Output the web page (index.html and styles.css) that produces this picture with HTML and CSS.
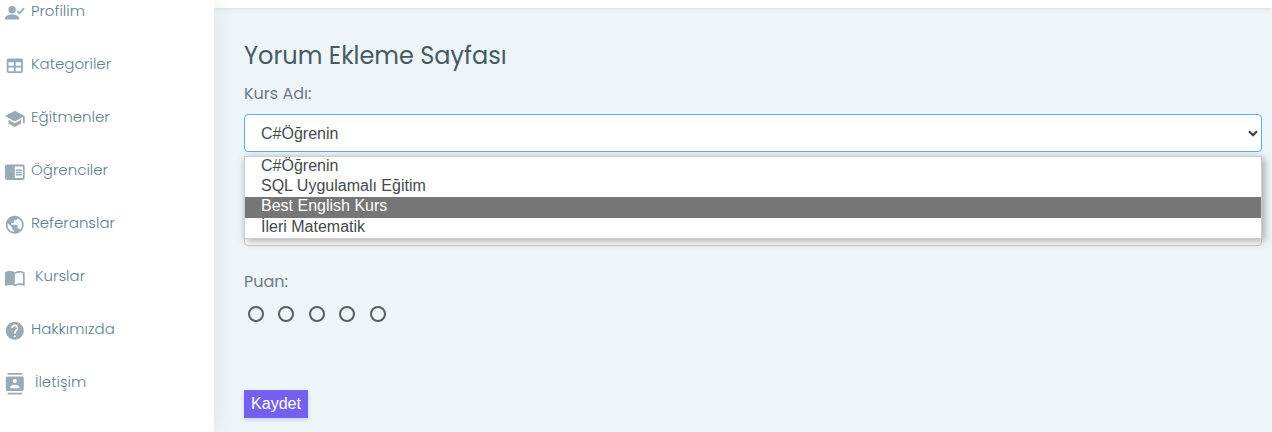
FILE: index.html
```html
<!DOCTYPE html>
<html lang="tr">
<head>
<meta charset="utf-8">
<title>Yorum Ekleme</title>
<link rel="stylesheet" href="styles.css">
</head>
<body>
<div class="layout">
  <nav class="sidebar">
    <a class="item"><svg viewBox="0 0 24 24"><path d="M9 4.500a4.100 4.100 0 1 1 0 8.200 4.100 4.100 0 0 1 0-8.200zM9 14c3.500 0 8 1.300 8 4.500V19.500H1v-1c0-3.200 4.500-4.500 8-4.500zM23 7.500l-5.700 6.500-3.300-3.300 1.400-1.400 1.800 1.800 4.300-5z"/></svg><span>Profilim</span></a>
    <a class="item"><svg viewBox="0 0 24 24"><path d="M5 4h14a2 2 0 0 1 2 2v12a2 2 0 0 1-2 2H5a2 2 0 0 1-2-2V6a2 2 0 0 1 2-2zm0 4v4h6V8H5zm8 0v4h6V8h-6zm-8 6v4h6v-4H5zm8 0v4h6v-4h-6z"/></svg><span>Kategoriler</span></a>
    <a class="item"><svg viewBox="0 0 24 24"><path d="M12 3L1 9l11 6 9-4.910V17h2V9M5 13.180v4L12 21l7-3.820v-4L12 17l-7-3.820z"/></svg><span>Eğitmenler</span></a>
    <a class="item"><svg viewBox="0 0 24 24"><path d="M21 4H3a2 2 0 0 0-2 2v13a2 2 0 0 0 2 2h18a2 2 0 0 0 2-2V6a2 2 0 0 0-2-2zm0 15h-9V6h9v13zm-1-9.500h-7V11h7V9.500zm0 2.500h-7v1.500h7V12zm0 2.500h-7V16h7v-1.500z"/></svg><span>Öğrenciler</span></a>
    <a class="item"><svg viewBox="0 0 24 24"><path d="M12 2C6.480 2 2 6.480 2 12s4.480 10 10 10 10-4.480 10-10S17.520 2 12 2zm-1 17.930c-3.950-.49-7-3.850-7-7.930 0-.62.08-1.210.21-1.790L9 15v1c0 1.100.9 2 2 2v1.930zm6.900-2.540c-.26-.81-1-1.390-1.900-1.390h-1v-3c0-.55-.45-1-1-1H8v-2h2c.55 0 1-.45 1-1V7h2c1.100 0 2-.9 2-2v-.41c2.930 1.190 5 4.060 5 7.410 0 2.080-.8 3.970-2.100 5.390z"/></svg><span>Referanslar</span></a>
    <a class="item indented"><svg viewBox="0 0 24 24"><path d="M21 5c-1.110-.35-2.330-.5-3.500-.5-1.950 0-4.050.4-5.500 1.500-1.450-1.100-3.550-1.500-5.500-1.500S2.450 4.900 1 6v14.650c0 .25.25.5.5.5.1 0 .15-.05.25-.05C3.100 20.450 5.050 20 6.500 20c1.950 0 4.050.4 5.500 1.500 1.350-.85 3.800-1.500 5.500-1.500 1.650 0 3.350.3 4.750 1.050.1.050.15.050.25.050.25 0 .5-.25.5-.5V6c-.6-.45-1.250-.75-2-1zm0 13.500c-1.100-.35-2.300-.5-3.500-.5-1.700 0-4.150.65-5.500 1.500V8c1.350-.85 3.800-1.500 5.500-1.500 1.200 0 2.400.15 3.500.5v11.500z"/></svg><span>Kurslar</span></a>
    <a class="item"><svg viewBox="0 0 24 24"><path d="M12 2C6.480 2 2 6.480 2 12s4.480 10 10 10 10-4.480 10-10S17.520 2 12 2zm1 17h-2v-2h2v2zm2.070-7.750l-.9.920C13.450 12.900 13 13.500 13 15h-2v-.5c0-1.100.45-2.100 1.170-2.830l1.240-1.260c.37-.36.590-.86.590-1.410 0-1.100-.9-2-2-2s-2 .9-2 2H8c0-2.210 1.790-4 4-4s4 1.790 4 4c0 .88-.36 1.680-.93 2.250z"/></svg><span>Hakkımızda</span></a>
    <a class="item indented"><svg viewBox="0 0 24 24"><path d="M20 0H4v2h16V0zM4 24h16v-2H4v2zM20 4H4a2 2 0 0 0-2 2v12a2 2 0 0 0 2 2h16a2 2 0 0 0 2-2V6a2 2 0 0 0-2-2zm-8 2.750a2.250 2.250 0 1 1 0 4.500 2.250 2.250 0 0 1 0-4.500zM17 17H7v-1.500c0-1.670 3.330-2.500 5-2.500s5 .83 5 2.500V17z"/></svg><span>İletişim</span></a>
  </nav>
  <div class="page">
    <header class="topbar"></header>
    <main class="content">
      <h1>Yorum Ekleme Sayfası</h1>
      <label class="label">Kurs Adı:</label>
      <div class="select">
        <span>C#Öğrenin</span>
        <svg class="chevron" viewBox="0 0 10 7"><path d="M1 1.300l4 4 4-4"/></svg>
        <div class="options">
          <div class="option">C#Öğrenin</div>
          <div class="option">SQL Uygulamalı Eğitim</div>
          <div class="option selected">Best English Kurs</div>
          <div class="option">İleri Matematik</div>
        </div>
      </div>
      <div class="comment"></div>
      <label class="label puan">Puan:</label>
      <div class="ratings"><i></i><i></i><i></i><i></i><i></i></div>
      <button class="save">Kaydet</button>
    </main>
  </div>
</div>
</body>
</html>
```
FILE: styles.css
```css
* { box-sizing: border-box; }
body {
  margin: 0;
  height: 432px;
  overflow: hidden;
  background: #edf5f9;
  font-family: Poppins, Inter, "Open Sans", sans-serif;
}
.layout { display: flex; height: 432px; }
.sidebar {
  position: relative;
  z-index: 1;
  width: 214px;
  flex: none;
  background: #fff;
  box-shadow: 1px 0 20px rgba(0, 0, 0, .08);
}
.item {
  display: flex;
  height: 53px;
  padding-left: 3.600px;
  color: #607f8d;
  font-size: 15px;
  font-weight: 300;
  line-height: 21px;
  white-space: nowrap;
}
.item svg {
  width: 21.600px;
  height: 21.600px;
  flex: none;
  margin: 2.200px 5.800px 0 0;
  fill: #98abb5;
}
.indented span { margin-left: 4px; }
.page { flex: 1; min-width: 0; }
.topbar {
  height: 8px;
  background: #fff;
  box-shadow: 0 1px 4px rgba(0, 0, 0, .1);
}
.content {
  display: flex;
  flex-direction: column;
  align-items: flex-start;
  padding: 32px 10px 0 30px;
}
h1 {
  margin: 0;
  height: 40px;
  color: #455a64;
  font-size: 24px;
  font-weight: 400;
  line-height: 31px;
}
.label {
  height: 34px;
  color: #6d7a82;
  font-size: 16px;
  line-height: 27px;
}
.select {
  position: relative;
  display: flex;
  align-items: center;
  justify-content: space-between;
  width: 1018px;
  height: 38px;
  padding: 0 3px 0 16px;
  border: 1px solid #56adf6;
  border-radius: 4px;
  background: #fff;
  color: #45494e;
  font: 16px "Liberation Sans", sans-serif;
}
.select > span { padding-top: 2px; }
.chevron {
  width: 10px;
  height: 7px;
  fill: none;
  stroke: #3e4347;
  stroke-width: 2.200;
}
.options {
  position: absolute;
  top: 41px;
  left: -1px;
  width: 1018px;
  height: 83px;
  border: 1px solid #cfcfcf;
  background: #fff;
  box-shadow: 2px 2px 8px rgba(0, 0, 0, .35);
}
.option { height: 20px; padding-left: 16px; line-height: 18px; }
.selected { height: 21px; background: #767676; color: #fff; }
.comment {
  width: 1018px;
  height: 38px;
  margin-top: 56px;
  border: 1px solid #c8cdd0;
  border-radius: 4px;
  background: #fff;
}
.puan { margin-top: 22px; }
.ratings { display: flex; gap: 14.400px; margin: 4px 0 0 4px; }
.ratings i {
  width: 16px;
  height: 16px;
  border: 2px solid #5b5d60;
  border-radius: 50%;
}
.save {
  width: 64px;
  height: 28px;
  margin-top: 68px;
  padding: 0;
  border: 0;
  background: #7460ee;
  color: #fff;
  font: 16px "Liberation Sans", sans-serif;
  box-shadow: 0 2px 4px rgba(116, 96, 238, .25);
}
```
